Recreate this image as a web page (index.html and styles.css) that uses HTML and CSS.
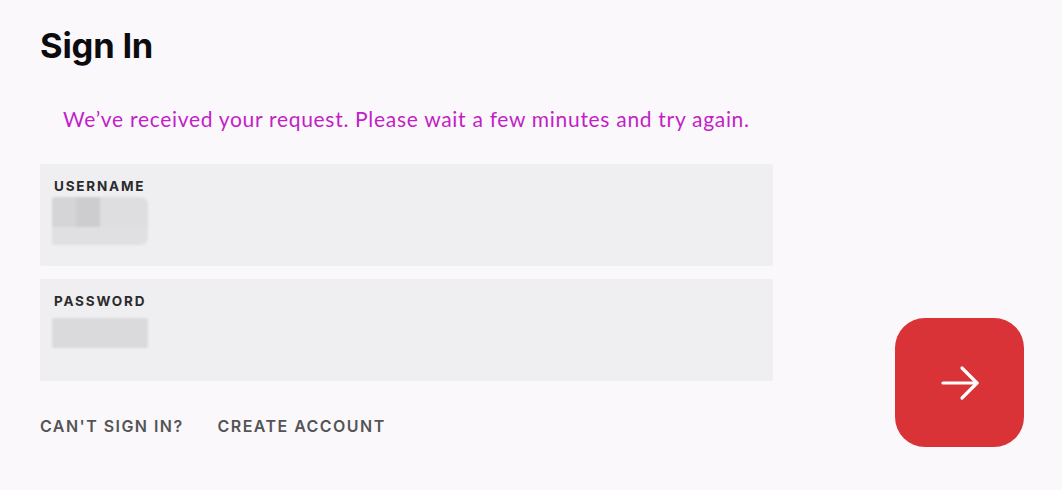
FILE: index.html
```html
<!DOCTYPE html>
<html lang="en">
<head>
<meta charset="utf-8">
<title>Sign In</title>
<link rel="stylesheet" href="styles.css">
</head>
<body>
<div class="page">
  <div class="form">
    <h1 class="title">Sign In</h1>
    <p class="notice">We’ve received your request. Please wait a few minutes and try again.</p>
    <div class="field field-user">
      <span class="label">USERNAME</span>
      <div class="blur blur-user">
        <span class="b1"></span><span class="b2"></span><span class="b3"></span>
      </div>
    </div>
    <div class="field field-pass">
      <span class="label">PASSWORD</span>
      <div class="blur blur-pass"></div>
    </div>
    <div class="links">
      <a class="link" href="#">CAN'T SIGN IN?</a>
      <a class="link" href="#">CREATE ACCOUNT</a>
    </div>
  </div>
  <button class="submit" aria-label="Sign in">
    <svg width="42" height="42" viewBox="0 0 42 42" fill="none" stroke="#fff" stroke-width="3.2" stroke-linecap="round" stroke-linejoin="round">
      <path d="M4 21H38"/>
      <path d="M23 6L38 21L23 36"/>
    </svg>
  </button>
</div>
</body>
</html>
```
FILE: styles.css
```css
html, body {
  margin: 0;
  padding: 0;
  background: #fbf8fb;
}
body {
  font-family: "Inter", "Noto Sans", sans-serif;
}
.page {
  display: flex;
  padding: 0 38px 0 40px;
  height: 490px;
  box-sizing: border-box;
}
.form {
  width: 733px;
  padding-top: 26px;
}
.title {
  margin: 0;
  font-family: "Inter", sans-serif;
  font-weight: 700;
  font-size: 34.5px;
  line-height: 40px;
  color: #0c0c0e;
  letter-spacing: -0.2px;
}
.notice {
  margin: 41px 0 0 23px;
  font-family: "Lato", sans-serif;
  font-size: 21px;
  line-height: 24px;
  color: #c21fc7;
  letter-spacing: 0.7px;
}
.field {
  position: relative;
  background: #efeef0;
  border-radius: 2px;
  height: 102px;
  box-sizing: border-box;
  padding: 14px 0 0 14px;
}
.field-user {
  margin-top: 33px;
}
.field-pass {
  margin-top: 13px;
}
.label {
  display: block;
  font-family: "Inter", sans-serif;
  font-weight: 700;
  font-size: 13.5px;
  line-height: 16px;
  letter-spacing: 1.8px;
  color: #2b2b2d;
}
.blur {
  margin-left: -2px;
  width: 96px;
  border-radius: 3px;
  filter: blur(1px);
}
.blur-user {
  margin-top: 3px;
  height: 48px;
  display: grid;
  grid-template-columns: 24px 24px 48px;
  grid-template-rows: 30px 18px;
  overflow: hidden;
  border-radius: 3px 8px 8px 3px;
}
.blur-user .b1 { background: #d5d5d7; }
.blur-user .b2 { background: #cdcdcf; }
.blur-user .b3 { background: #dedee0; }
.blur-user::after {
  content: "";
  grid-column: 1 / 4;
  background: #e0e0e2;
}
.blur-pass {
  margin-top: 9px;
  height: 30px;
  background: #dadadc;
}
.links {
  display: flex;
  gap: 34px;
  margin-top: 36px;
}
.link {
  font-family: "Inter", sans-serif;
  font-weight: 600;
  font-size: 16px;
  line-height: 18px;
  letter-spacing: 1.45px;
  color: #545456;
  text-decoration: none;
}
.submit {
  margin-left: auto;
  align-self: flex-end;
  margin-bottom: 43px;
  width: 129px;
  height: 129px;
  border: none;
  border-radius: 30px;
  background: #d93237;
  display: flex;
  align-items: center;
  justify-content: center;
  padding: 0;
  cursor: pointer;
}
```
